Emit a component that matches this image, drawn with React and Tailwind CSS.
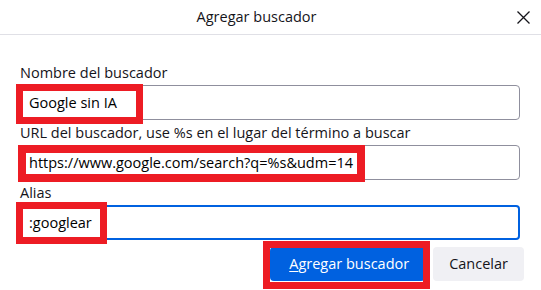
const FONT = { fontFamily: '"Open Sans", "Noto Sans", sans-serif' };

function Field({ label, value, focused }) {
  return (
    <div className="flex flex-col">
      <label className="mb-[3px] h-[20px] text-[14.5px] leading-[21px] text-[#15141a]">{label}</label>
      <div
        className={`flex h-[35px] items-center rounded-[4px] bg-white text-[14.5px] text-black ${
          focused ? 'border-2 border-[#0061e0] pl-[7px]' : 'border border-[#8f8f9d] pl-[8px]'
        }`}
      >
        {value}
      </div>
    </div>
  );
}

function Mark({ className }) {
  return <div className={`pointer-events-none absolute border-[7px] border-[#ed1c24] ${className}`} />;
}

export default function App() {
  return (
    <div className="relative h-[290px] w-[541px] overflow-hidden bg-white" style={FONT}>
      <header className="flex h-[35px] items-center border-b border-[#e0e0e6]">
        <h1 className="flex-1 pl-2 text-center text-[14.5px] text-[#15141a]">Agregar buscador</h1>
        <button type="button" className="flex h-[34px] w-[36px] items-center justify-center" aria-label="Cerrar">
          <svg width="13" height="13" viewBox="0 0 13 13" fill="none" stroke="#15141a" strokeWidth="1.3">
            <path d="M0.5 0.5l12 12M12.5 0.5l-12 12" />
          </svg>
        </button>
      </header>

      <div className="flex flex-col gap-[2px] pl-5 pr-[21px] pt-[27px]">
        <Field label="Nombre del buscador" value="Google sin IA" />
        <Field label="URL del buscador, use %s en el lugar del término a buscar" value="https://www.google.com/search?q=%s&udm=14" />
        <Field label="Alias" value=":googlear" focused />
      </div>

      <div className="mt-[7px] flex justify-end gap-2 pr-[17px]">
        <button type="button" className="h-[34px] rounded-[4px] bg-[#0061e0] pl-[19px] pr-4 text-[14.5px] text-white">
          <span className="underline underline-offset-2">A</span>gregar buscador
        </button>
        <button type="button" className="h-[34px] rounded-[4px] bg-[#f0f0f4] px-4 text-[14.5px] text-[#15141a]">
          Cancelar
        </button>
      </div>

      <Mark className="left-[16px] top-[84px] h-[40px] w-[127px]" />
      <Mark className="left-[18px] top-[145px] h-[37px] w-[347px] border-[8px]" />
      <Mark className="left-[16px] top-[202px] h-[42px] w-[91px]" />
      <Mark className="left-[263px] top-[241px] h-[48px] w-[167px]" />
    </div>
  );
}
